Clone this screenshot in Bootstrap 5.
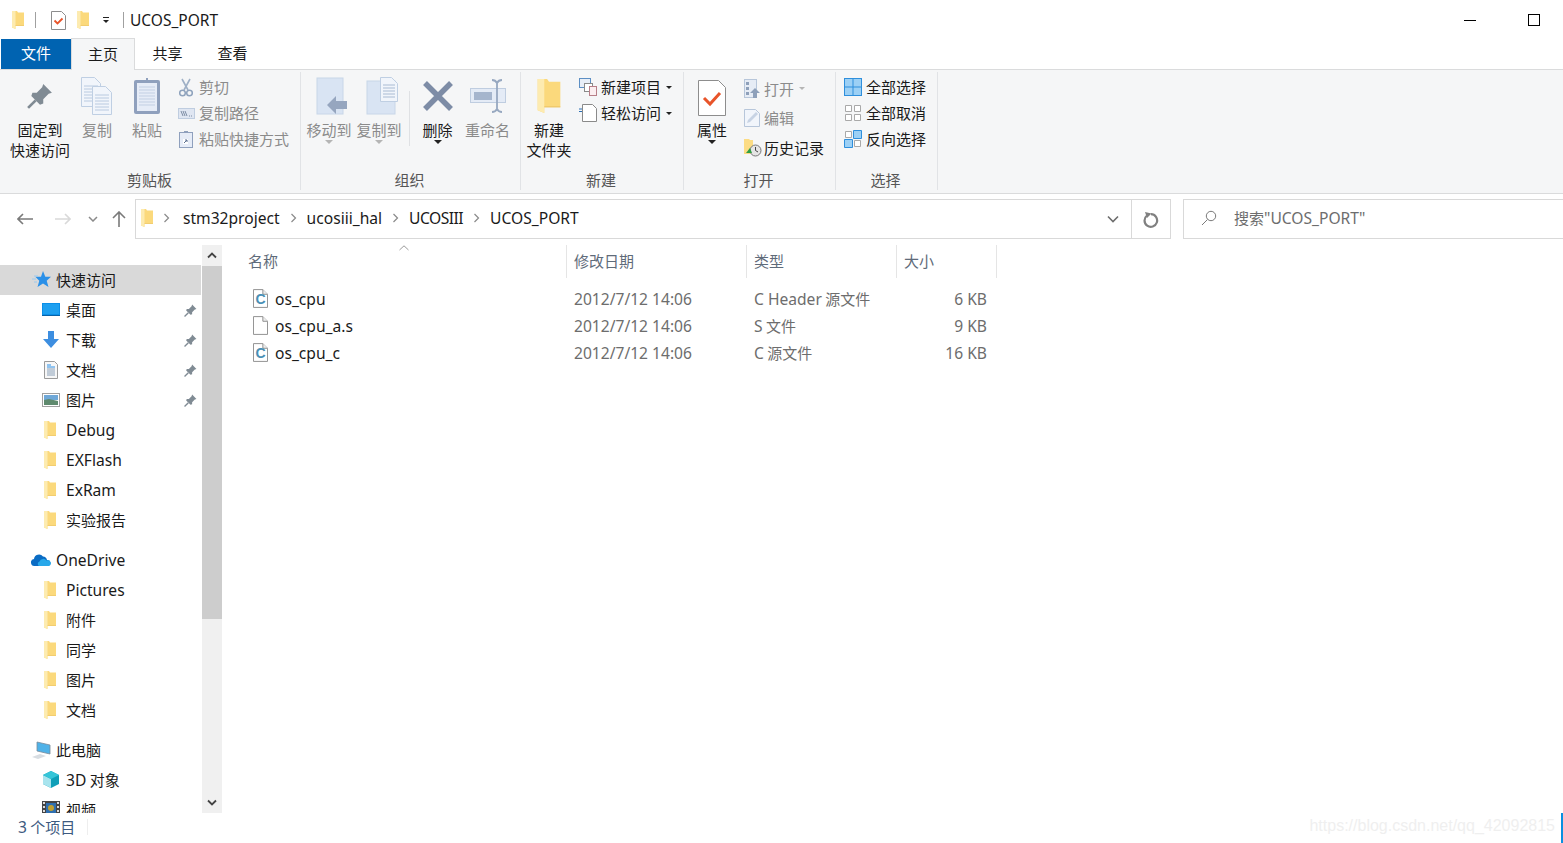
<!DOCTYPE html>
<html lang="zh-CN">
<head>
    <meta charset="UTF-8">
    <title>UCOS_PORT</title>
    <link href="https://cdn.jsdelivr.net/npm/bootstrap@5.3.0/dist/css/bootstrap.min.css" rel="stylesheet">
    <style>
        html, body { height: 100%; overflow: hidden; }
        body { font-family: "Noto Sans CJK SC", "Noto Sans", sans-serif; font-size: 15px; line-height: 20px; color: #1a1a1a; background: #fff; }
        .lat { font-family: "Noto Sans", "Noto Sans CJK SC", sans-serif; font-size: 15.6px; }
        .lat-tight { letter-spacing: -.5px; }
        svg { display: block; flex: none; }

        .title-row { height: 38px; padding-top: 2px; }
        .title-sep { width: 1px; height: 16px; background: #a0a0a0; }
        .title-text { margin-left: 6px; font-size: 15.5px; }
        .win-min { width: 12px; height: 1px; background: #000; }
        .win-max { width: 12px; height: 12px; margin-left: 52px; margin-right: 23px; border: 1px solid #000; }

        .tab-row { height: 32px; padding-left: 1px; border-bottom: 1px solid #dadbdc; }
        .tab-file { width: 70px; height: 30px; margin-top: 1px; background: #0063b1; color: #fff; text-align: center; line-height: 28px; }
        .tab-home { width: 64px; height: 32px; background: #f5f6f7; border: 1px solid #dadbdc; border-bottom: 0; text-align: center; line-height: 29px; }
        .tab-plain { width: 65px; line-height: 29px; text-align: center; }

        .ribbon { height: 124px; padding-left: 1px; background: #f5f6f7; border-bottom: 1px solid #dadbdc; }
        .rb-group { margin-top: 2px; height: 118px; border-right: 1px solid #e1e3e6; flex: none; }
        .rb-items { height: 98px; }
        .rb-label { height: 20px; padding-right: 2px; text-align: center; color: #555; }
        .rb-big { display: flex; flex-direction: column; align-items: center; flex: none; text-align: center; }
        .rb-big-icon { height: 48px; display: flex; align-items: center; justify-content: center; }
        .rb-small { height: 26px; display: flex; align-items: center; white-space: nowrap; }
        .rb-small-tall { height: 29.5px; }
        .rb-sep { width: 1px; height: 55px; margin-top: 19px; background: #dfe1e4; flex: none; }
        .is-off { color: #8b8b8b; }
        .caret-dn { width: 0; height: 0; border-left: 4px solid transparent; border-right: 4px solid transparent; border-top: 4px solid #222; }
        .caret-sm { display: block; margin-left: 5px; border-top-width: 3px; border-left-width: 3px; border-right-width: 3px; }
        .caret-off { border-top-color: #b5b5b5; }

        .addr-row { height: 51px; padding-top: 5px; }
        .addr-nav { width: 135px; height: 40px; flex: none; }
        .addr-box { width: 1036px; height: 40px; padding-bottom: 2px; border: 1px solid #d9d9d9; flex: none; }
        .addr-drop { width: 36px; margin-bottom: -2px; }
        .addr-refresh { width: 39px; height: 38px; margin-bottom: -2px; border-left: 1px solid #d9d9d9; }
        .search-box { width: 381px; height: 40px; margin-left: 12px; padding-bottom: 2px; border: 1px solid #d9d9d9; flex: none; color: #6d6d6d; }
        .crumb-sep { margin: 0 10px; }

        .main-area { height: 568px; }
        .nav-pane { width: 202px; padding-top: 20px; overflow: hidden; flex: none; }
        .nv-row { height: 30px; width: 201px; display: flex; align-items: center; white-space: nowrap; }
        .nv-l1 { padding-left: 31px; }
        .nv-l1 svg:first-child { margin-right: 5px; }
        .nv-l2 { padding-left: 42px; }
        .nv-l2 svg:first-child { margin-right: 4px; }
        .nv-active { background: #d9d9d9; }
        .nv-gap { margin-top: 10px; }
        .nv-pin { margin-left: auto; margin-right: 4px; }

        .scroll-col { width: 20px; background: #f0f0f0; flex: none; }
        .scroll-btn { height: 21px; }
        .scroll-thumb { height: 353px; background: #cdcdcd; }
        .scroll-down { margin-top: 180px; }

        .file-pane { padding-left: 23px; flex: 1; }
        .file-head { height: 33px; color: #5f6b7a; position: relative; }
        .file-head .fcell { height: 33px; padding-top: 6px; border-right: 1px solid #e5e5e5; }
        .file-head .f-name { padding-left: 3px; }
        .sort-mark { position: absolute; left: 154px; top: 0; }
        .fcell { flex: none; padding-left: 7px; white-space: nowrap; }
        .f-name { width: 322px; }
        .f-date { width: 180px; }
        .f-type { width: 150px; }
        .f-size { width: 100px; }
        .file-list { padding-top: 7px; }
        .file-row { height: 27px; }
        .file-row .f-name { display: flex; align-items: center; padding-left: 8px; color: #1a1a1a; }
        .file-row .f-date, .file-row .f-type, .file-row .f-size { color: #6d6d6d; }
        .file-row .f-size { text-align: right; padding-right: 10px; }
        .file-row .f-name svg { margin-right: 7px; }
        .c-mark { font-family: "Liberation Sans", sans-serif; font-size: 15px; font-weight: 700; fill: #4a8fb5; }

        .status-row { height: 30px; position: relative; color: #3d5a80; padding-left: 18px; padding-bottom: 2px; }
        .status-sep { width: 1px; height: 16px; background: #eee; margin-left: 12px; }
        .watermark { position: absolute; right: 8px; top: 3px; font-family: "Liberation Sans", sans-serif; font-size: 16px; color: #efefef; }
        .focus-line { position: absolute; right: 0; top: 0; width: 2px; height: 30px; background: #0a8fe0; }
    </style>
</head>
<body>
    <svg width="0" height="0" class="position-absolute">
        <symbol id="folder" viewBox="0 0 12 18">
            <path d="M0 0h5l1 1.500h6V15H3.500v3L0 16.500z" fill="#fbd97c"/>
            <path d="M0 0h3.500v18L0 16.500z" fill="#fdebb0"/>
            <path d="M3.500 14.500H12v.5H3.500z" fill="#e8c164"/>
        </symbol>
        <symbol id="pin" viewBox="0 0 24 24">
            <path d="M15 1l8 8-3 1-5 5 0 4-3 1-8-8 1-3h4l5-5z" fill="#808b94"/>
            <path d="M8 16l-7 7" stroke="#808b94" stroke-width="2.500"/>
        </symbol>
        <symbol id="plain-file" viewBox="0 0 16 20">
            <path d="M.5.5h10l5 5v14H.5z" fill="#fff" stroke="#8c8c8c"/>
            <path d="M10.500.5v5h5" fill="#eee" stroke="#8c8c8c"/>
        </symbol>
    </svg>

    <!-- title bar -->
    <div class="title-row d-flex align-items-center">
        <svg width="12" height="18" style="margin-left:12px"><use href="#folder"/></svg>
        <span class="title-sep" style="margin-left:11px"></span>
        <svg width="15" height="19" viewBox="0 0 15 19" style="margin-left:15px">
            <path d="M.5.500h10l4 4v14H.5z" fill="#fff" stroke="#8d8d8d"/>
            <path d="M3.500 9.500l3 3 5-5" fill="none" stroke="#e8542a" stroke-width="1.800"/>
        </svg>
        <svg width="12" height="18" style="margin-left:11px"><use href="#folder"/></svg>
        <svg width="8" height="8" viewBox="0 0 8 8" style="margin-left:13px">
            <path d="M1 1.500h6" stroke="#222"/><path d="M1 4h6L4 7z" fill="#222"/>
        </svg>
        <span class="title-sep" style="margin-left:13px"></span>
        <span class="lat title-text">UCOS_PORT</span>
        <span class="win-min ms-auto"></span>
        <span class="win-max"></span>
    </div>

    <!-- tabs -->
    <div class="tab-row d-flex">
        <div class="tab-file">文件</div>
        <div class="tab-home">主页</div>
        <div class="tab-plain">共享</div>
        <div class="tab-plain">查看</div>
    </div>

    <!-- ribbon -->
    <div class="ribbon d-flex">
        <div class="rb-group" style="width:300px">
            <div class="rb-items d-flex">
                <div class="rb-big" style="width:78px">
                    <div class="rb-big-icon"><svg width="26" height="26"><use href="#pin"/></svg></div>
                    <div>固定到<br>快速访问</div>
                </div>
                <div class="rb-big is-off" style="width:36px">
                    <div class="rb-big-icon">
                        <svg width="32" height="38" viewBox="0 0 32 38">
                            <path d="M.5.500h13l6 6v23H.5z" fill="#f1f5fb" stroke="#bfcfe3"/>
                            <path d="M3 9h14M3 12h14M3 15h14M3 18h14M3 21h14M3 24h14" stroke="#b9cae0"/>
                            <path d="M11.500 9.500h13l6 6v22h-19z" fill="#f1f5fb" stroke="#bfcfe3"/>
                            <path d="M14 18h14M14 21h14M14 24h14M14 27h14M14 30h14M14 33h14" stroke="#b9cae0"/>
                        </svg>
                    </div>
                    <div>复制</div>
                </div>
                <div class="rb-big is-off" style="width:64px">
                    <div class="rb-big-icon">
                        <svg width="28" height="38" viewBox="0 0 28 38">
                            <rect x="1" y="3" width="26" height="34" rx="2" fill="#8fa0bd"/>
                            <rect x="4" y="6" width="20" height="28" fill="#e6ecf7"/>
                            <path d="M6 10h16M6 13h16M6 16h16M6 19h16M6 22h16M6 25h16M6 28h16" stroke="#c2cfe3"/>
                            <path d="M10 6V3h3V1h2v2h3v3z" fill="#8fa0bd"/>
                        </svg>
                    </div>
                    <div>粘贴</div>
                </div>
                <div class="is-off" style="padding-top:2px">
                    <div class="rb-small">
                        <svg width="14" height="19" viewBox="0 0 14 19" style="margin-right:6px">
                            <path d="M3 1l6 11M11 1L5 12" stroke="#9fb0c6" stroke-width="1.600"/>
                            <circle cx="3.500" cy="15" r="2.800" fill="none" stroke="#8fa3bd" stroke-width="1.500"/>
                            <circle cx="10.500" cy="15" r="2.800" fill="none" stroke="#8fa3bd" stroke-width="1.500"/>
                        </svg>剪切
                    </div>
                    <div class="rb-small">
                        <svg width="17" height="11" viewBox="0 0 17 11" style="margin-left:-1px;margin-right:4px">
                            <rect x=".5" y=".5" width="16" height="10" fill="#dfe6f2" stroke="#bfcde0"/>
                            <path d="M3 3l2 5M5 3l2 5M7 3l2 5M11 8h1M13 8h1" stroke="#7d8da5"/>
                        </svg>复制路径
                    </div>
                    <div class="rb-small">
                        <svg width="14" height="18" viewBox="0 0 14 18" style="margin-right:6px">
                            <rect x=".5" y="2.500" width="13" height="15" fill="#e6ecf7" stroke="#8fa0bd"/>
                            <path d="M5 1h4v2H5z" fill="#8fa0bd"/>
                            <path d="M4 9h5v5H4z" fill="#fff"/><path d="M5 13l3-3M6 10h2v2" stroke="#5a6f8f" fill="none"/>
                        </svg>粘贴快捷方式
                    </div>
                </div>
            </div>
            <div class="rb-label">剪贴板</div>
        </div>

        <div class="rb-group" style="width:220px">
            <div class="rb-items d-flex" style="padding-left:5px">
                <div class="rb-big is-off" style="width:46px">
                    <div class="rb-big-icon">
                        <svg width="32" height="38" viewBox="0 0 32 38" style="margin-left:6px">
                            <rect x="1" y="1" width="26" height="36" fill="#d9e4f3" stroke="#c8d6e8"/>
                            <path d="M11 28l9-9v5h11v8H20v5z" fill="#96a6bf"/>
                        </svg>
                    </div>
                    <div>移动到</div>
                    <div class="caret-dn caret-off"></div>
                </div>
                <div class="rb-big is-off" style="width:54px">
                    <div class="rb-big-icon">
                        <svg width="32" height="38" viewBox="0 0 32 38" style="margin-left:6px">
                            <rect x="1" y="4" width="28" height="33" fill="#d9e4f3" stroke="#c8d6e8"/>
                            <path d="M14.500.5h11l6 6v18h-17z" fill="#f1f5fb" stroke="#bfcfe3"/>
                            <path d="M17 8h12M17 11h12M17 14h12M17 17h12M17 20h12" stroke="#a9bbd3"/>
                        </svg>
                    </div>
                    <div>复制到</div>
                    <div class="caret-dn caret-off"></div>
                </div>
                <div class="rb-sep" style="margin-left:3px"></div>
                <div class="rb-big" style="width:45px;margin-left:5px">
                    <div class="rb-big-icon">
                        <svg width="32" height="32" viewBox="0 0 32 32"><path d="M3 3l26 26M29 3L3 29" stroke="#7d8ca6" stroke-width="5.500"/></svg>
                    </div>
                    <div>删除</div>
                    <div class="caret-dn"></div>
                </div>
                <div class="rb-big is-off" style="width:55px">
                    <div class="rb-big-icon">
                        <svg width="36" height="34" viewBox="0 0 36 34">
                            <rect x=".5" y="9.500" width="35" height="14" fill="#e4ebf6" stroke="#bfcde0"/>
                            <rect x="4" y="13" width="18" height="8" fill="#a5b5cd"/>
                            <path d="M22 1c3 0 4 1 5 3 1-2 2-3 5-3M27 4v26M22 33c3 0 4-1 5-3 1 2 2 3 5 3" fill="none" stroke="#97a8c0" stroke-width="1.800"/>
                        </svg>
                    </div>
                    <div>重命名</div>
                </div>
            </div>
            <div class="rb-label">组织</div>
        </div>

        <div class="rb-group" style="width:163px">
            <div class="rb-items d-flex">
                <div class="rb-big" style="width:56px">
                    <div class="rb-big-icon"><svg width="24" height="34"><use href="#folder"/></svg></div>
                    <div>新建<br>文件夹</div>
                </div>
                <div style="padding-top:2px;margin-left:2px">
                    <div class="rb-small">
                        <svg width="18" height="18" viewBox="0 0 18 18" style="margin-right:4px">
                            <rect x=".5" y=".5" width="11" height="9" fill="#e8eef7" stroke="#5d8fc4"/>
                            <rect x="5.500" y="5.500" width="8" height="8" fill="#fff" stroke="#8a8a8a"/>
                            <rect x="10.500" y="8.500" width="7" height="9" fill="#fbeef0" stroke="#b77f88"/>
                        </svg>新建项目<span class="caret-dn caret-sm"></span>
                    </div>
                    <div class="rb-small">
                        <svg width="18" height="18" viewBox="0 0 18 18" style="margin-right:4px">
                            <path d="M3.500.5h10l4 4v13h-14z" fill="#fff" stroke="#8a8a8a"/>
                            <path d="M0 5h3M0 7.500h3" stroke="#2a6fb5"/>
                        </svg>轻松访问<span class="caret-dn caret-sm"></span>
                    </div>
                </div>
            </div>
            <div class="rb-label">新建</div>
        </div>

        <div class="rb-group" style="width:152px">
            <div class="rb-items d-flex">
                <div class="rb-big" style="width:56px">
                    <div class="rb-big-icon">
                        <svg width="28" height="36" viewBox="0 0 28 36" class="mt-1">
                            <path d="M.5.500h20l7 7v28H.5z" fill="#fff" stroke="#8d8d8d"/>
                            <path d="M6 18l6 6 10-11" fill="none" stroke="#e8542a" stroke-width="3"/>
                        </svg>
                    </div>
                    <div>属性</div>
                    <div class="caret-dn"></div>
                </div>
                <div style="margin-left:4px;padding-top:2px">
                    <div class="rb-small rb-small-tall is-off">
                        <svg width="16" height="20" viewBox="0 0 16 20" style="margin-right:4px">
                            <rect x=".5" y=".5" width="12" height="18" fill="#e6ecf5" stroke="#b7c6da"/>
                            <path d="M2 3h3v3H2zM2 8h3v3H2zM2 13h3v3H2z" fill="#8ea0ba"/>
                            <path d="M11 9l5 5h-3v5H9v-5H6z" fill="#8ea0ba"/>
                        </svg>打开<span class="caret-dn caret-off caret-sm"></span>
                    </div>
                    <div class="rb-small rb-small-tall is-off">
                        <svg width="16" height="18" viewBox="0 0 16 18" style="margin-right:4px">
                            <path d="M.5.500h11l4 4v13H.5z" fill="#f1f5fb" stroke="#b7c6da"/>
                            <path d="M3 14l1-3 8-8 2 2-8 8z" fill="#c7d3e4"/>
                        </svg>编辑
                    </div>
                    <div class="rb-small rb-small-tall">
                        <svg width="18" height="18" viewBox="0 0 18 18" style="margin-right:2px">
                            <path d="M0 0h5l1 1h3v14H0z" fill="#fcdc84"/>
                            <circle cx="11.500" cy="11.500" r="5.500" fill="#e5e5e5" stroke="#777"/>
                            <path d="M11.500 8v3.500l2.500 1.500" fill="none" stroke="#444"/>
                            <path d="M8 14H2l4-5z" fill="#2f9e44"/>
                        </svg>历史记录
                    </div>
                </div>
            </div>
            <div class="rb-label">打开</div>
        </div>

        <div class="rb-group" style="width:102px">
            <div class="rb-items" style="padding:2px 0 0 8px">
                <div class="rb-small">
                    <svg width="18" height="18" viewBox="0 0 18 18" style="margin-right:4px">
                        <rect x=".5" y=".5" width="17" height="17" fill="#9cd0f5" stroke="#2f8fdc"/>
                        <path d="M9 0v18M0 9h18" stroke="#2f8fdc"/>
                    </svg>全部选择
                </div>
                <div class="rb-small">
                    <svg width="18" height="18" viewBox="0 0 18 18" style="margin-right:4px">
                        <path d="M1.500 1.500h6v6h-6zM10.500 1.500h6v6h-6zM1.500 10.500h6v6h-6zM10.500 10.500h6v6h-6z" fill="#fff" stroke="#a9a9a9"/>
                    </svg>全部取消
                </div>
                <div class="rb-small">
                    <svg width="18" height="18" viewBox="0 0 18 18" style="margin-right:4px">
                        <path d="M1.500 1.500h6v6h-6zM10.500 10.500h6v6h-6z" fill="#fff" stroke="#a9a9a9"/>
                        <path d="M9.500.5h8v8h-8zM.5 9.500h8v8h-8z" fill="#9cd0f5" stroke="#2f8fdc"/>
                    </svg>反向选择
                </div>
            </div>
            <div class="rb-label">选择</div>
        </div>
    </div>

    <!-- address row -->
    <div class="addr-row d-flex">
        <div class="addr-nav d-flex align-items-center">
            <svg width="16" height="12" viewBox="0 0 16 12" style="margin-left:17px"><path d="M6 1L1 6l5 5M1 6h15" fill="none" stroke="#7a7a7a" stroke-width="1.600"/></svg>
            <svg width="16" height="12" viewBox="0 0 16 12" style="margin-left:22px"><path d="M10 1l5 5-5 5M15 6H0" fill="none" stroke="#d9d9d9" stroke-width="1.600"/></svg>
            <svg width="10" height="6" viewBox="0 0 10 6" style="margin-left:17px"><path d="M1 1l4 4 4-4" fill="none" stroke="#8a8a8a" stroke-width="1.500"/></svg>
            <svg width="14" height="16" viewBox="0 0 14 16" style="margin-left:14px"><path d="M1 7l6-6 6 6M7 1v15" fill="none" stroke="#7a7a7a" stroke-width="1.600"/></svg>
        </div>
        <div class="addr-box d-flex align-items-center">
            <svg width="12" height="18" style="margin-left:5px"><use href="#folder"/></svg>
            <svg class="crumb-sep" width="7" height="10" viewBox="0 0 7 10" style="margin-right:13px"><path d="M1.500 1l4 4-4 4" fill="none" stroke="#8a8a8a" stroke-width="1.200"/></svg>
            <span class="lat">stm32project</span>
            <svg class="crumb-sep" width="7" height="10" viewBox="0 0 7 10"><path d="M1.500 1l4 4-4 4" fill="none" stroke="#8a8a8a" stroke-width="1.200"/></svg>
            <span class="lat">ucosiii_hal</span>
            <svg class="crumb-sep" width="7" height="10" viewBox="0 0 7 10"><path d="M1.500 1l4 4-4 4" fill="none" stroke="#8a8a8a" stroke-width="1.200"/></svg>
            <span class="lat lat-tight">UCOSIII</span>
            <svg class="crumb-sep" width="7" height="10" viewBox="0 0 7 10"><path d="M1.500 1l4 4-4 4" fill="none" stroke="#8a8a8a" stroke-width="1.200"/></svg>
            <span class="lat">UCOS_PORT</span>
            <div class="addr-drop ms-auto d-flex justify-content-center">
                <svg width="12" height="8" viewBox="0 0 12 8"><path d="M1 1.500l5 5 5-5" fill="none" stroke="#6d6d6d" stroke-width="1.600"/></svg>
            </div>
            <div class="addr-refresh d-flex align-items-center justify-content-center">
                <svg width="16" height="17" viewBox="0 0 16 17"><path d="M4 4.500a6.300 6.300 0 1 0 4-1.300" fill="none" stroke="#808080" stroke-width="2.200"/><path d="M2 1l6.500 1.500L4 7z" fill="#808080"/></svg>
            </div>
        </div>
        <div class="search-box d-flex align-items-center">
            <svg width="16" height="16" viewBox="0 0 16 16" style="margin-left:17px;margin-right:17px"><circle cx="10" cy="6" r="4.700" fill="none" stroke="#7a7a7a"/><path d="M6.500 9.500L1 15" stroke="#7a7a7a"/></svg>
            <span>搜索<span class="lat">"UCOS_PORT"</span></span>
        </div>
    </div>

    <!-- nav + files -->
    <div class="main-area d-flex">
        <div class="nav-pane">
            <div class="nv-row nv-l1 nv-active">
                <svg width="20" height="20" viewBox="0 0 20 20"><path d="M12 1l2.300 5.700H20l-4.300 4 1.800 6.300L12 13.500 6.500 17l1.800-6.300-4-4H10z" fill="#2a90e8"/><path d="M3 6h4M1 9h4M3 12h3" stroke="#9cc9ee"/></svg>快速访问
            </div>
            <div class="nv-row nv-l2">
                <svg width="20" height="20" viewBox="0 0 20 20"><rect x="0" y="3" width="18" height="13" fill="#0a8fe8"/><path d="M1 4h16v10H1z" fill="#1ea0f0"/><path d="M0 15h18v1H0z" fill="#0863a8"/></svg>桌面
                <svg class="nv-pin" width="13" height="13"><use href="#pin"/></svg>
            </div>
            <div class="nv-row nv-l2">
                <svg width="20" height="20" viewBox="0 0 20 20"><path d="M6 1h6v8h5l-8 9-8-9h5z" fill="#3d8ee0"/></svg>下载
                <svg class="nv-pin" width="13" height="13"><use href="#pin"/></svg>
            </div>
            <div class="nv-row nv-l2">
                <svg width="20" height="20" viewBox="0 0 20 20"><path d="M2.500 1.500h10l3 3v14h-13z" fill="#f7f7f7" stroke="#9a9a9a"/><path d="M5 5h4M5 7h8" stroke="#2a90e8"/><path d="M5 9h8M5 11h8M5 13h8M5 15h8" stroke="#8aa0b8"/></svg>文档
                <svg class="nv-pin" width="13" height="13"><use href="#pin"/></svg>
            </div>
            <div class="nv-row nv-l2">
                <svg width="20" height="20" viewBox="0 0 20 20"><rect x=".5" y="3.500" width="17" height="13" fill="#fff" stroke="#a0a0a0"/><rect x="2" y="5" width="14" height="5" fill="#6fa8d8"/><path d="M2 10l5-1 9 2v4H2z" fill="#5f8a6e"/></svg>图片
                <svg class="nv-pin" width="13" height="13"><use href="#pin"/></svg>
            </div>
            <div class="nv-row nv-l2"><svg width="20" height="20" viewBox="-2 -1 20 20"><use href="#folder" width="12" height="18"/></svg><span class="lat">Debug</span></div>
            <div class="nv-row nv-l2"><svg width="20" height="20" viewBox="-2 -1 20 20"><use href="#folder" width="12" height="18"/></svg><span class="lat">EXFlash</span></div>
            <div class="nv-row nv-l2"><svg width="20" height="20" viewBox="-2 -1 20 20"><use href="#folder" width="12" height="18"/></svg><span class="lat">ExRam</span></div>
            <div class="nv-row nv-l2"><svg width="20" height="20" viewBox="-2 -1 20 20"><use href="#folder" width="12" height="18"/></svg>实验报告</div>

            <div class="nv-row nv-l1 nv-gap">
                <svg width="20" height="20" viewBox="0 0 20 20"><path d="M4 16a3.500 3.500 0 0 1-1-7 5 5 0 0 1 9-2.500A4.500 4.500 0 0 1 16 10a3 3 0 0 1 1 6z" fill="#0a6cc4"/><path d="M8 16a2.500 2.500 0 0 1 .5-4.500 4 4 0 0 1 7-1 3 3 0 0 1 2.500 5.500z" fill="#28a8ea"/></svg><span class="lat">OneDrive</span>
            </div>
            <div class="nv-row nv-l2"><svg width="20" height="20" viewBox="-2 -1 20 20"><use href="#folder" width="12" height="18"/></svg><span class="lat">Pictures</span></div>
            <div class="nv-row nv-l2"><svg width="20" height="20" viewBox="-2 -1 20 20"><use href="#folder" width="12" height="18"/></svg>附件</div>
            <div class="nv-row nv-l2"><svg width="20" height="20" viewBox="-2 -1 20 20"><use href="#folder" width="12" height="18"/></svg>同学</div>
            <div class="nv-row nv-l2"><svg width="20" height="20" viewBox="-2 -1 20 20"><use href="#folder" width="12" height="18"/></svg>图片</div>
            <div class="nv-row nv-l2"><svg width="20" height="20" viewBox="-2 -1 20 20"><use href="#folder" width="12" height="18"/></svg>文档</div>

            <div class="nv-row nv-l1 nv-gap">
                <svg width="20" height="20" viewBox="0 0 20 20"><path d="M6 2l13 3v9L6 11z" fill="#4fb2e8" stroke="#7a8a9a" stroke-width=".8"/><path d="M1 17l8-3 6 2-8 3z" fill="#d8dde2"/></svg>此电脑
            </div>
            <div class="nv-row nv-l2">
                <svg width="20" height="20" viewBox="0 0 20 20"><path d="M9 1l8 4v9l-8 4-8-4V5z" fill="#0f9fb8"/><path d="M1 5l8 4v9l-8-4z" fill="#a8e4ee"/><path d="M9 1l8 4-8 4-8-4z" fill="#35c5d8"/></svg><span><span class="lat">3D</span> 对象</span>
            </div>
            <div class="nv-row nv-l2">
                <svg width="20" height="20" viewBox="0 0 20 20"><rect x="0" y="1" width="18" height="16" fill="#444"/><path d="M1 2h2v2H1zM1 6h2v2H1zM1 10h2v2H1zM15 2h2v2h-2zM15 6h2v2h-2zM15 10h2v2h-2z" fill="#ddd"/><rect x="4" y="3" width="10" height="10" fill="#2f6fb0"/><circle cx="9" cy="8" r="3" fill="#c0a030"/></svg>视频
            </div>
        </div>

        <div class="scroll-col">
            <div class="scroll-btn d-flex align-items-center justify-content-center">
                <svg width="10" height="7" viewBox="0 0 10 7"><path d="M1 5.500l4-4 4 4" fill="none" stroke="#444" stroke-width="1.800"/></svg>
            </div>
            <div class="scroll-thumb"></div>
            <div class="scroll-down d-flex justify-content-center">
                <svg width="10" height="7" viewBox="0 0 10 7"><path d="M1 1.500l4 4 4-4" fill="none" stroke="#444" stroke-width="1.800"/></svg>
            </div>
        </div>

        <div class="file-pane">
            <div class="file-head d-flex">
                <svg class="sort-mark" width="10" height="6" viewBox="0 0 10 6"><path d="M.5 5L5 .8 9.500 5" fill="none" stroke="#9a9a9a"/></svg>
                <div class="fcell f-name">名称</div>
                <div class="fcell f-date">修改日期</div>
                <div class="fcell f-type">类型</div>
                <div class="fcell f-size">大小</div>
            </div>
            <div class="file-list">
                <div class="file-row d-flex align-items-center">
                    <div class="fcell f-name">
                        <svg width="15" height="19" viewBox="0 0 16 20"><path d="M.5.5h10l5 5v14H.5z" fill="#fff" stroke="#8c8c8c"/><path d="M10.500.5v5h5" fill="#eee" stroke="#8c8c8c"/><text x="8" y="16" text-anchor="middle" class="c-mark">C</text></svg>
                        <span class="lat">os_cpu</span>
                    </div>
                    <div class="fcell f-date lat">2012/7/12 14:06</div>
                    <div class="fcell f-type"><span class="lat">C Header</span> 源文件</div>
                    <div class="fcell f-size lat">6 KB</div>
                </div>
                <div class="file-row d-flex align-items-center">
                    <div class="fcell f-name"><svg width="15" height="19"><use href="#plain-file"/></svg><span class="lat">os_cpu_a.s</span></div>
                    <div class="fcell f-date lat">2012/7/12 14:06</div>
                    <div class="fcell f-type"><span class="lat">S</span> 文件</div>
                    <div class="fcell f-size lat">9 KB</div>
                </div>
                <div class="file-row d-flex align-items-center">
                    <div class="fcell f-name">
                        <svg width="15" height="19" viewBox="0 0 16 20"><path d="M.5.5h10l5 5v14H.5z" fill="#fff" stroke="#8c8c8c"/><path d="M10.500.5v5h5" fill="#eee" stroke="#8c8c8c"/><text x="8" y="16" text-anchor="middle" class="c-mark">C</text></svg>
                        <span class="lat">os_cpu_c</span>
                    </div>
                    <div class="fcell f-date lat">2012/7/12 14:06</div>
                    <div class="fcell f-type"><span class="lat">C</span> 源文件</div>
                    <div class="fcell f-size lat">16 KB</div>
                </div>
            </div>
        </div>
    </div>

    <!-- status -->
    <div class="status-row d-flex align-items-center">
        <span><span class="lat">3</span> 个项目</span>
        <span class="status-sep"></span>
        <span class="watermark">https://blog.csdn.net/qq_42092815</span>
        <span class="focus-line"></span>
    </div>

    <script src="https://cdn.jsdelivr.net/npm/bootstrap@5.3.0/dist/js/bootstrap.bundle.min.js"></script>
</body>
</html>
